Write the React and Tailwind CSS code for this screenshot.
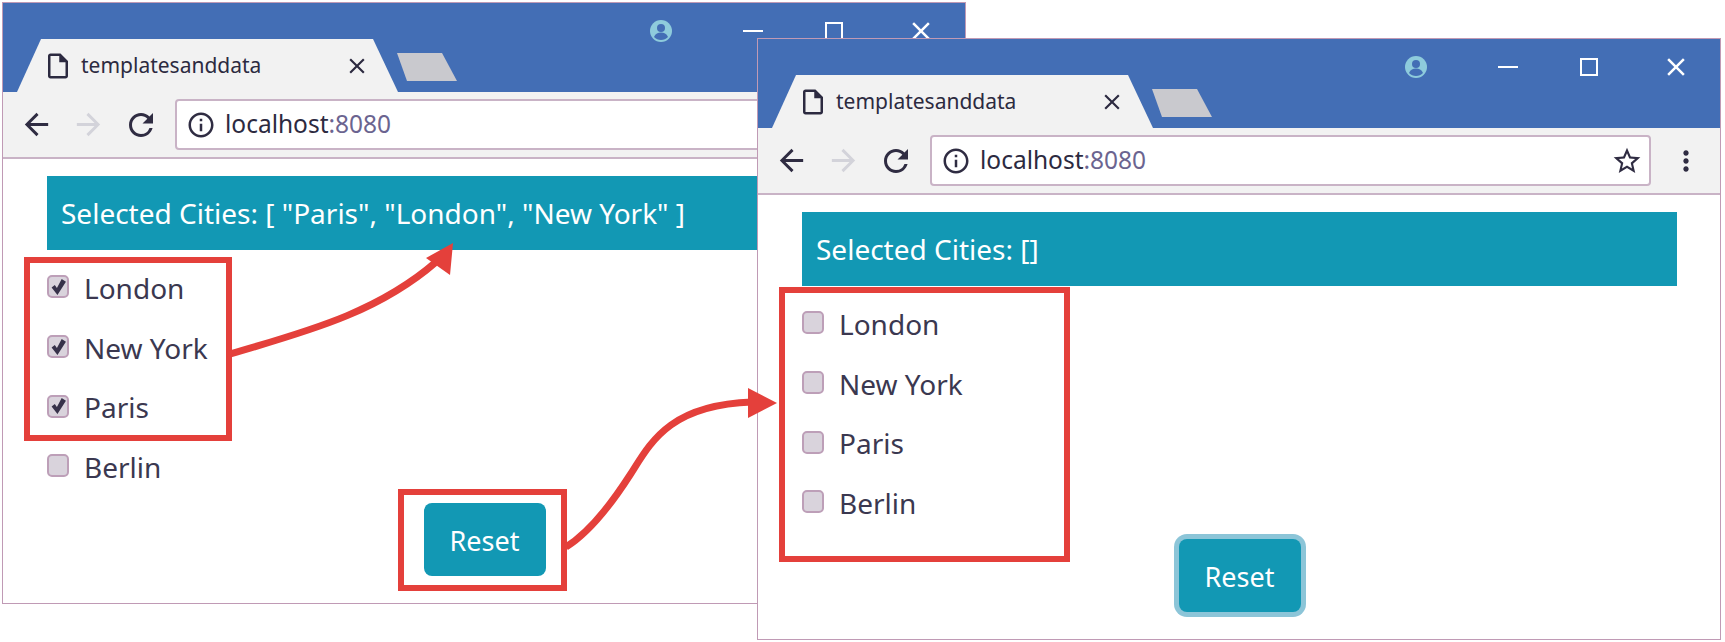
import React from 'react';
import { MdArrowBack, MdArrowForward, MdRefresh, MdInfoOutline, MdStarBorder, MdMoreVert, MdClose, MdOutlineInsertDriveFile } from 'react-icons/md';

const cities = ['London', 'New York', 'Paris', 'Berlin'];

function ProfileIcon() {
  return (
    <svg viewBox="0 0 24 24" className="w-[24px] h-[24px]">
      <circle cx="12" cy="12" r="11" fill="#8ecbdc" />
      <circle cx="12" cy="9" r="4" fill="#436eb5" />
      <path d="M5 18c1.500-3.500 4-4.500 7-4.500s5.500 1 7 4.500c-1.800 2-4.300 3-7 3s-5.200-1-7-3z" fill="#436eb5" />
    </svg>
  );
}

function CheckRow({ label, checked }) {
  return (
    <div className="flex items-center h-[59.700px]">
      <span className="w-[22px] h-[23px] ml-[44px] mb-[2px] rounded-[5px] border-2 border-[#bd9fb8] bg-[#d9d3dc] flex items-center justify-center">
        {checked && (
          <svg viewBox="0 0 16 16" className="w-[17px] h-[18px] shrink-0">
            <path d="M1.500 8.500l3-2.500 2 3L11 0.500 15 3 7 15.500z" fill="#37324a" />
          </svg>
        )}
      </span>
      <span className="ml-[15px] text-[28px] leading-none text-[#3b3850]">{label}</span>
    </div>
  );
}

function BrowserWindow({ className, selected, focused, showStar }) {
  return (
    <div className={`absolute w-[964px] h-[602px] bg-white border border-[#c09ab5] flex flex-col ${className}`}>
      <div className="h-[89px] bg-[#436eb5] flex shrink-0">
        <div className="flex items-end pl-[14px]">
          <div className="w-[381px] h-[53px] bg-[#f2f2f2] [clip-path:polygon(0_100%,24px_0,356px_0,381px_100%)] flex items-center pl-[26px]">
            <MdOutlineInsertDriveFile className="w-[30px] h-[30px] text-[#2c2a40]" />
            <span className="ml-[8px] text-[21px] text-[#2c2a40] w-[263px]">templatesanddata</span>
            <MdClose className="w-[26px] h-[26px] text-[#2c2a40]" />
          </div>
          <div className="w-[60px] h-[28px] -ml-[1px] mb-[11px] bg-[#c9c9ce] [clip-path:polygon(0_0,45px_0,60px_100%,10px_100%)]" />
        </div>
        <div className="flex items-center h-[56px] text-white">
          <div className="ml-[192px]"><ProfileIcon /></div>
          <div className="ml-[70px] w-[20px] h-[2px] bg-white" />
          <div className="ml-[62px] w-[18px] h-[18px] border-2 border-white" />
          <MdClose className="ml-[63px] w-[30px] h-[30px]" />
        </div>
      </div>
      <div className="h-[67px] bg-[#f2f2f2] border-b-2 border-[#c9b3c6] flex items-center shrink-0 pl-[16px]">
        <MdArrowBack className="w-[35px] h-[35px] text-[#2f2c42]" />
        <MdArrowForward className="ml-[17px] w-[35px] h-[35px] text-[#d3d3da]" />
        <MdRefresh className="ml-[17px] w-[36px] h-[36px] text-[#2f2c42]" />
        <div className="ml-[16px] w-[721px] h-[51px] bg-white border-2 border-[#c9b3c6] rounded-[4px] flex items-center pl-[9px]">
          <MdInfoOutline className="w-[30px] h-[30px] text-[#2f2c42]" />
          <span className="ml-[9px] text-[24.500px] text-[#2c2a40]">localhost<span className="text-[#6b6490]">:8080</span></span>
          {showStar && <MdStarBorder className="ml-auto mr-[6px] w-[32px] h-[32px] text-[#2f2c42]" />}
        </div>
        <MdMoreVert className="ml-[19px] w-[32px] h-[32px] text-[#2f2c42]" />
      </div>
      <div className="flex-1 pt-[17px]">
        <div className="ml-[44px] w-[875px] h-[74px] bg-[#1298b4] flex items-center pl-[14px] text-[28px] text-white">
          Selected Cities: {selected}
        </div>
        <div className="mt-[8px]">
          {cities.map((city) => (
            <CheckRow key={city} label={city} checked={selected !== '[]' && city !== 'Berlin'} />
          ))}
        </div>
        <div className="ml-[44px] w-[875px] mt-[6px] flex justify-center">
          <button className={`w-[122px] h-[73px] pt-[3px] rounded-[8px] bg-[#1298b4] text-white text-[27px] ${focused ? 'ring-[5px] ring-[#8cc5d8]' : ''}`}>
            Reset
          </button>
        </div>
      </div>
    </div>
  );
}

export default function App() {
  return (
    <div className="relative w-[1725px] h-[642px] bg-white overflow-hidden font-['Noto_Sans',sans-serif]">
      <BrowserWindow className="left-[2px] top-[2px]" selected={'[ "Paris", "London", "New York" ]'} />
      <BrowserWindow className="left-[757px] top-[38px]" selected="[]" focused showStar />

      {/* red callouts over the screenshots */}
      <div className="absolute left-[24px] top-[257px] w-[208px] h-[184px] border-[6px] border-[#e4403b]" />
      <div className="absolute left-[398px] top-[489px] w-[169px] h-[102px] border-[6px] border-[#e4403b]" />
      <div className="absolute left-[779px] top-[287px] w-[291px] h-[275px] border-[6px] border-[#e4403b]" />

      <svg className="absolute inset-0 w-[1725px] h-[642px] pointer-events-none" viewBox="0 0 1725 642">
        <path d="M227 355C300 333 375 315 436 262" fill="none" stroke="#e4403b" strokeWidth="7" />
        <polygon points="453,243 426,258 450,275" fill="#e4403b" />
        <path d="M566 547C590 532 612 503 630 475C650 444 668 405 752 402" fill="none" stroke="#e4403b" strokeWidth="7" />
        <polygon points="777,403 748,388 748,418" fill="#e4403b" />
      </svg>
    </div>
  );
}
